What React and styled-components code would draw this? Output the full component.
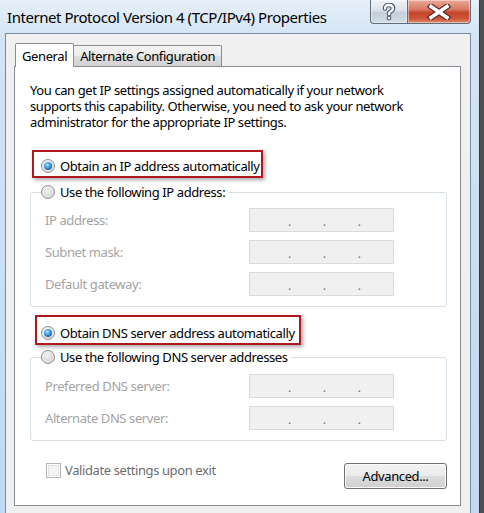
import React from 'react'
import styled, { createGlobalStyle } from 'styled-components'

const GlobalStyle = createGlobalStyle`
  html, body {
    margin: 0;
    padding: 0;
    background: #4d4f52;
  }
  body {
    font-family: "Noto Sans", "Open Sans", sans-serif;
    letter-spacing: -0.4px;
  }
`

const Window = styled.div`
  width: 480px;
  height: 513px;
  box-sizing: border-box;
  padding: 0 8px 0 5px;
  border-right: 1px solid #2f3a45;
  background: linear-gradient(to bottom, #e6eff9 0, #d3e3f4 40px, #c2d9f1 100%);
  display: flex;
  flex-direction: column;
  overflow: hidden;
`

const TitleBar = styled.div`
  height: 33px;
  display: flex;
  align-items: flex-start;
  flex: none;
`

const Title = styled.div`
  margin: 8px 0 0 2px;
  font-size: 15px;
  line-height: 18px;
  letter-spacing: -0.45px;
  color: #000;
`

const CaptionButtons = styled.div`
  margin-left: auto;
  display: flex;
`

const CaptionButton = styled.div`
  height: 24px;
  box-sizing: border-box;
  border: 1px solid #5d6b7a;
  border-top: none;
  display: grid;
  place-items: center;
  width: ${p => p.close ? '63px' : '38px'};
  border-radius: ${p => p.close ? '0 0 4px 0' : '0 0 0 4px'};
  border-left: ${p => p.close ? 'none' : '1px solid #5d6b7a'};
  background: ${p => p.close
    ? 'linear-gradient(to bottom, #eaa896 0, #d97c66 40%, #c5452c 55%, #cf5437 80%, #e0896d 100%)'
    : 'linear-gradient(to bottom, #eef2f6 0, #dbe2ea 45%, #c4cfdb 55%, #d3dce6 100%)'};
  box-shadow: inset 0 0 0 1px rgba(255, 255, 255, 0.45);
`

const Client = styled.div`
  flex: 1;
  display: flex;
  flex-direction: column;
  border: 1px solid #7c8b9b;
  border-bottom: none;
  background: #f0f0f0;
  padding: 9px 9px 0 8px;
`

const TabStrip = styled.div`
  display: flex;
  align-items: flex-end;
  height: 23px;
  padding-left: 1px;
`

const Tab = styled.div`
  box-sizing: border-box;
  border: 1px solid #898c95;
  border-bottom: none;
  display: flex;
  align-items: center;
  padding: 0 6px;
  font-size: 13px;
  color: #000;
  position: relative;
  height: ${p => p.active ? '24px' : '21px'};
  margin-bottom: ${p => p.active ? '-1px' : '0'};
  margin-left: ${p => p.active ? '0' : '-1px'};
  z-index: ${p => p.active ? 1 : 0};
  background: ${p => p.active
    ? '#fff'
    : 'linear-gradient(to bottom, #f3f3f3 0, #ebebeb 50%, #dedede 50%, #d2d2d2 100%)'};
  border-radius: 2px 2px 0 0;
`

const Panel = styled.div`
  background: #fff;
  border: 1px solid #898c95;
  padding: 15px 13px 16px 15px;
  display: flex;
  flex-direction: column;
`

const Intro = styled.p`
  margin: 0;
  font-size: 13px;
  line-height: 16px;
  color: #000;
`

const RadioRow = styled.label`
  position: relative;
  align-self: flex-start;
  display: inline-flex;
  align-items: center;
  gap: 5px;
  height: 16px;
  margin: ${p => p.margin};
  font-size: 13px;
  color: #000;
`

const Radio = styled.span`
  width: 14px;
  height: 14px;
  flex: none;
  box-sizing: border-box;
  border-radius: 50%;
  border: 1px solid #8e9092;
  background: radial-gradient(circle at 40% 35%, #fbfbfb 0, #e2e2e2 60%, #c9c9c9 100%);
  display: grid;
  place-items: center;

  &::after {
    content: '';
    width: 8px;
    height: 8px;
    border-radius: 50%;
    background: ${p => p.checked
      ? 'radial-gradient(circle at 40% 35%, #b5e6ff 0, #46a9e6 35%, #1d5fa1 75%, #0f3f72 100%)'
      : 'radial-gradient(circle at 40% 35%, #f2f2f2 0, #dadada 70%, #cfcfcf 100%)'};
  }
`

const Highlight = styled.span`
  position: absolute;
  top: ${p => p.inset[0]}px;
  right: ${p => p.inset[1]}px;
  bottom: ${p => p.inset[2]}px;
  left: ${p => p.inset[3]}px;
  border: 2px solid #b0181d;
  box-shadow: 2px 2px 4px rgba(0, 0, 0, 0.35);
  pointer-events: none;
`

const Group = styled.fieldset`
  margin: ${p => p.margin};
  padding: 0;
  min-width: 0;
  border: 1px solid #d5dfe5;
  border-radius: 3px;
`

const Legend = styled.legend`
  margin-left: 10px;
  padding: 0 3px 0 0;
  height: 16px;
  display: flex;
  align-items: center;
  gap: 5px;
  font-size: 13px;
  color: #000;
`

const GroupBody = styled.div`
  display: grid;
  grid-template-columns: 204px 145px;
  row-gap: 8px;
  align-items: center;
  padding: ${p => p.padTop}px 0 10px 14px;
`

const FieldLabel = styled.span`
  font-size: 13px;
  color: #a3a3a3;
`

const IpField = styled.div`
  height: 24px;
  box-sizing: border-box;
  border: 1px solid #dadada;
  background: #f0f0f0;
  display: flex;
  align-items: center;
  gap: 32px;
  padding: 2px 0 0 38px;
  font-size: 12px;
  color: #6f6f6f;
`

const Footer = styled.div`
  display: flex;
  justify-content: space-between;
  align-items: flex-start;
  margin-top: 22px;
  padding-left: 16px;
`

const CheckRow = styled.label`
  display: flex;
  align-items: center;
  gap: 4px;
  height: 16px;
  margin-top: -1px;
  font-size: 13px;
  color: #6d6d6d;
`

const Checkbox = styled.span`
  width: 15px;
  height: 15px;
  box-sizing: border-box;
  border: 1px solid #b4b4b4;
  background: #f4f4f4;
  box-shadow: inset 0 0 0 1px #fff, inset 0 0 0 2px #e3e3e3;
`

const Button = styled.button`
  width: 103px;
  height: 26px;
  box-sizing: border-box;
  border: 1px solid #707070;
  border-radius: 3px;
  background: linear-gradient(to bottom, #f2f2f2 0, #ebebeb 50%, #dddddd 50%, #cfcfcf 100%);
  box-shadow: inset 0 0 0 1px #fbfbfb;
  font-family: inherit;
  letter-spacing: inherit;
  font-size: 13px;
  color: #000;
  padding: 0;
`

const HelpIcon = () => (
  <svg width="14" height="18" viewBox="0 0 14 18">
    <path d="M3 5.5 Q3 2 7 2 Q11 2 11 5.3 Q11 7.3 8.4 8.6 Q7 9.4 7 11" fill="none" stroke="#4a5868" strokeWidth="4.6" strokeLinecap="round" />
    <circle cx="7" cy="15" r="2.3" fill="#4a5868" />
    <path d="M3 5.5 Q3 2 7 2 Q11 2 11 5.3 Q11 7.3 8.4 8.6 Q7 9.4 7 11" fill="none" stroke="#fff" strokeWidth="2.4" strokeLinecap="round" />
    <circle cx="7" cy="15" r="1.2" fill="#fff" />
  </svg>
)

const CloseIcon = () => (
  <svg width="26" height="16" viewBox="0 0 26 16">
    <path d="M5 2.5 L21 13.5 M21 2.5 L5 13.5" stroke="#5a2a22" strokeWidth="6" strokeLinecap="square" />
    <path d="M5 2.5 L21 13.5 M21 2.5 L5 13.5" stroke="#fff" strokeWidth="3.6" strokeLinecap="square" />
  </svg>
)

const IpAddress = () => (
  <IpField>
    <span>.</span>
    <span>.</span>
    <span>.</span>
  </IpField>
)

const FieldRows = ({ labels }) => labels.map(label => (
  <React.Fragment key={label}>
    <FieldLabel>{label}</FieldLabel>
    <IpAddress />
  </React.Fragment>
))

export default function App() {
  return (
    <>
      <GlobalStyle />
      <Window>
        <TitleBar>
          <Title>Internet Protocol Version 4 (TCP/IPv4) Properties</Title>
          <CaptionButtons>
            <CaptionButton><HelpIcon /></CaptionButton>
            <CaptionButton close><CloseIcon /></CaptionButton>
          </CaptionButtons>
        </TitleBar>
        <Client>
          <TabStrip>
            <Tab active>General</Tab>
            <Tab>Alternate Configuration</Tab>
          </TabStrip>
          <Panel>
            <Intro>
              You can get IP settings assigned automatically if your network<br />
              supports this capability. Otherwise, you need to ask your network<br />
              administrator for the appropriate IP settings.
            </Intro>

            <RadioRow margin="28px 0 0 11px">
              <Radio checked />
              Obtain an IP address automatically
              <Highlight inset={[-8, -4, -4, -9]} />
            </RadioRow>

            <Group margin="10px 0 0 0">
              <Legend>
                <Radio />
                Use the following IP address:
              </Legend>
              <GroupBody padTop={8}>
                <FieldRows labels={['IP address:', 'Subnet mask:', 'Default gateway:']} />
              </GroupBody>
            </Group>

            <RadioRow margin="18px 0 0 11px">
              <Radio checked />
              Obtain DNS server address automatically
              <Highlight inset={[-10, -6, -4, -6]} />
            </RadioRow>

            <Group margin="8px 0 0 0">
              <Legend>
                <Radio />
                Use the following DNS server addresses
              </Legend>
              <GroupBody padTop={9}>
                <FieldRows labels={['Preferred DNS server:', 'Alternate DNS server:']} />
              </GroupBody>
            </Group>

            <Footer>
              <CheckRow>
                <Checkbox />
                Validate settings upon exit
              </CheckRow>
              <Button>Advanced...</Button>
            </Footer>
          </Panel>
        </Client>
      </Window>
    </>
  )
}
